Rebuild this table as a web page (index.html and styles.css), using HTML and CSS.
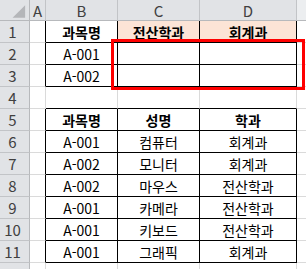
FILE: index.html
```html
<!DOCTYPE html>
<html lang="ko">
<head>
<meta charset="utf-8">
<link rel="stylesheet" href="styles.css">
</head>
<body>
<div class="sheet">
  <div class="grid">
    <div class="corner"><svg width="30" height="21" viewBox="0 0 30 21"><polygon points="13,18 26,18 26,5" fill="#b4b6b9"/></svg></div>
    <div class="ch">A</div>
    <div class="ch">B</div>
    <div class="ch">C</div>
    <div class="ch">D</div>
    <div class="ch ch-e"></div>

    <div class="rh">1</div>
    <div class="c tl"></div>
    <div class="c t hd">과목명</div>
    <div class="c t hd peach">전산학과</div>
    <div class="c t hd peach">회계과</div>
    <div class="c e"></div>

    <div class="rh">2</div>
    <div class="c tl"></div>
    <div class="c t">A-001</div>
    <div class="c t"></div>
    <div class="c t"></div>
    <div class="c e"></div>

    <div class="rh">3</div>
    <div class="c tl"></div>
    <div class="c t">A-002</div>
    <div class="c t"></div>
    <div class="c t"></div>
    <div class="c e"></div>

    <div class="rh">4</div>
    <div class="c"></div>
    <div class="c above"></div>
    <div class="c above"></div>
    <div class="c above"></div>
    <div class="c e"></div>

    <div class="rh">5</div>
    <div class="c tl"></div>
    <div class="c t hd">과목명</div>
    <div class="c t hd">성명</div>
    <div class="c t hd">학과</div>
    <div class="c e"></div>

    <div class="rh">6</div>
    <div class="c tl"></div>
    <div class="c t">A-001</div>
    <div class="c t">컴퓨터</div>
    <div class="c t">회계과</div>
    <div class="c e"></div>

    <div class="rh">7</div>
    <div class="c tl"></div>
    <div class="c t">A-002</div>
    <div class="c t">모니터</div>
    <div class="c t">회계과</div>
    <div class="c e"></div>

    <div class="rh">8</div>
    <div class="c tl"></div>
    <div class="c t">A-002</div>
    <div class="c t">마우스</div>
    <div class="c t">전산학과</div>
    <div class="c e"></div>

    <div class="rh">9</div>
    <div class="c tl"></div>
    <div class="c t">A-001</div>
    <div class="c t">카메라</div>
    <div class="c t">전산학과</div>
    <div class="c e"></div>

    <div class="rh">10</div>
    <div class="c tl"></div>
    <div class="c t">A-001</div>
    <div class="c t">키보드</div>
    <div class="c t">전산학과</div>
    <div class="c e"></div>

    <div class="rh">11</div>
    <div class="c tl"></div>
    <div class="c t">A-001</div>
    <div class="c t">그래픽</div>
    <div class="c t">회계과</div>
    <div class="c e"></div>

    <div class="rh"></div>
    <div class="c"></div>
    <div class="c"></div>
    <div class="c"></div>
    <div class="c"></div>
    <div class="c e"></div>
  </div>
  <div class="shape"></div>
</div>
</body>
</html>
```

FILE: styles.css
```css
html, body {
  margin: 0;
  padding: 0;
  background: #ffffff;
  overflow: hidden;
}

.sheet {
  position: relative;
  width: 306px;
  height: 269px;
  overflow: hidden;
  font-family: "Noto Sans CJK KR", "Noto Sans", sans-serif;
}

.grid {
  display: grid;
  grid-template-columns: 30px 16px 72px 82px 97px 20px;
  grid-template-rows: 21px repeat(12, 22px);
}

.grid > div {
  box-sizing: border-box;
  display: flex;
  align-items: center;
  justify-content: center;
}

.corner {
  background: #e1e3e6;
  border-right: 1px solid #b7b9bc;
  border-bottom: 1px solid #b7b9bc;
}

.corner svg {
  display: block;
}

.ch {
  background: #e1e3e6;
  border-right: 1px solid #c2c4c7;
  border-bottom: 1px solid #b7b9bc;
  color: #404040;
  font-size: 15px;
  padding-top: 1px;
}

.ch-e {
  background: #eceef0;
}

.rh {
  background: #e1e3e6;
  border-right: 1px solid #b7b9bc;
  border-bottom: 1px solid #c2c4c7;
  color: #404040;
  font-size: 15px;
  padding-right: 4px;
}

.c {
  border-right: 1px solid #dadada;
  border-bottom: 1px solid #dadada;
  font-size: 14px;
  color: #000000;
  white-space: nowrap;
}

.c.tl {
  border-right-color: #000000;
}

.c.t {
  border-right-color: #000000;
  border-bottom-color: #000000;
}

.c.above {
  border-bottom-color: #000000;
}

.hd {
  font-weight: 700;
}

.peach {
  background: #fce4d6;
}

.shape {
  position: absolute;
  left: 111px;
  top: 39px;
  width: 194px;
  height: 51px;
  box-sizing: border-box;
  border: 3px solid #ff0000;
}
```
